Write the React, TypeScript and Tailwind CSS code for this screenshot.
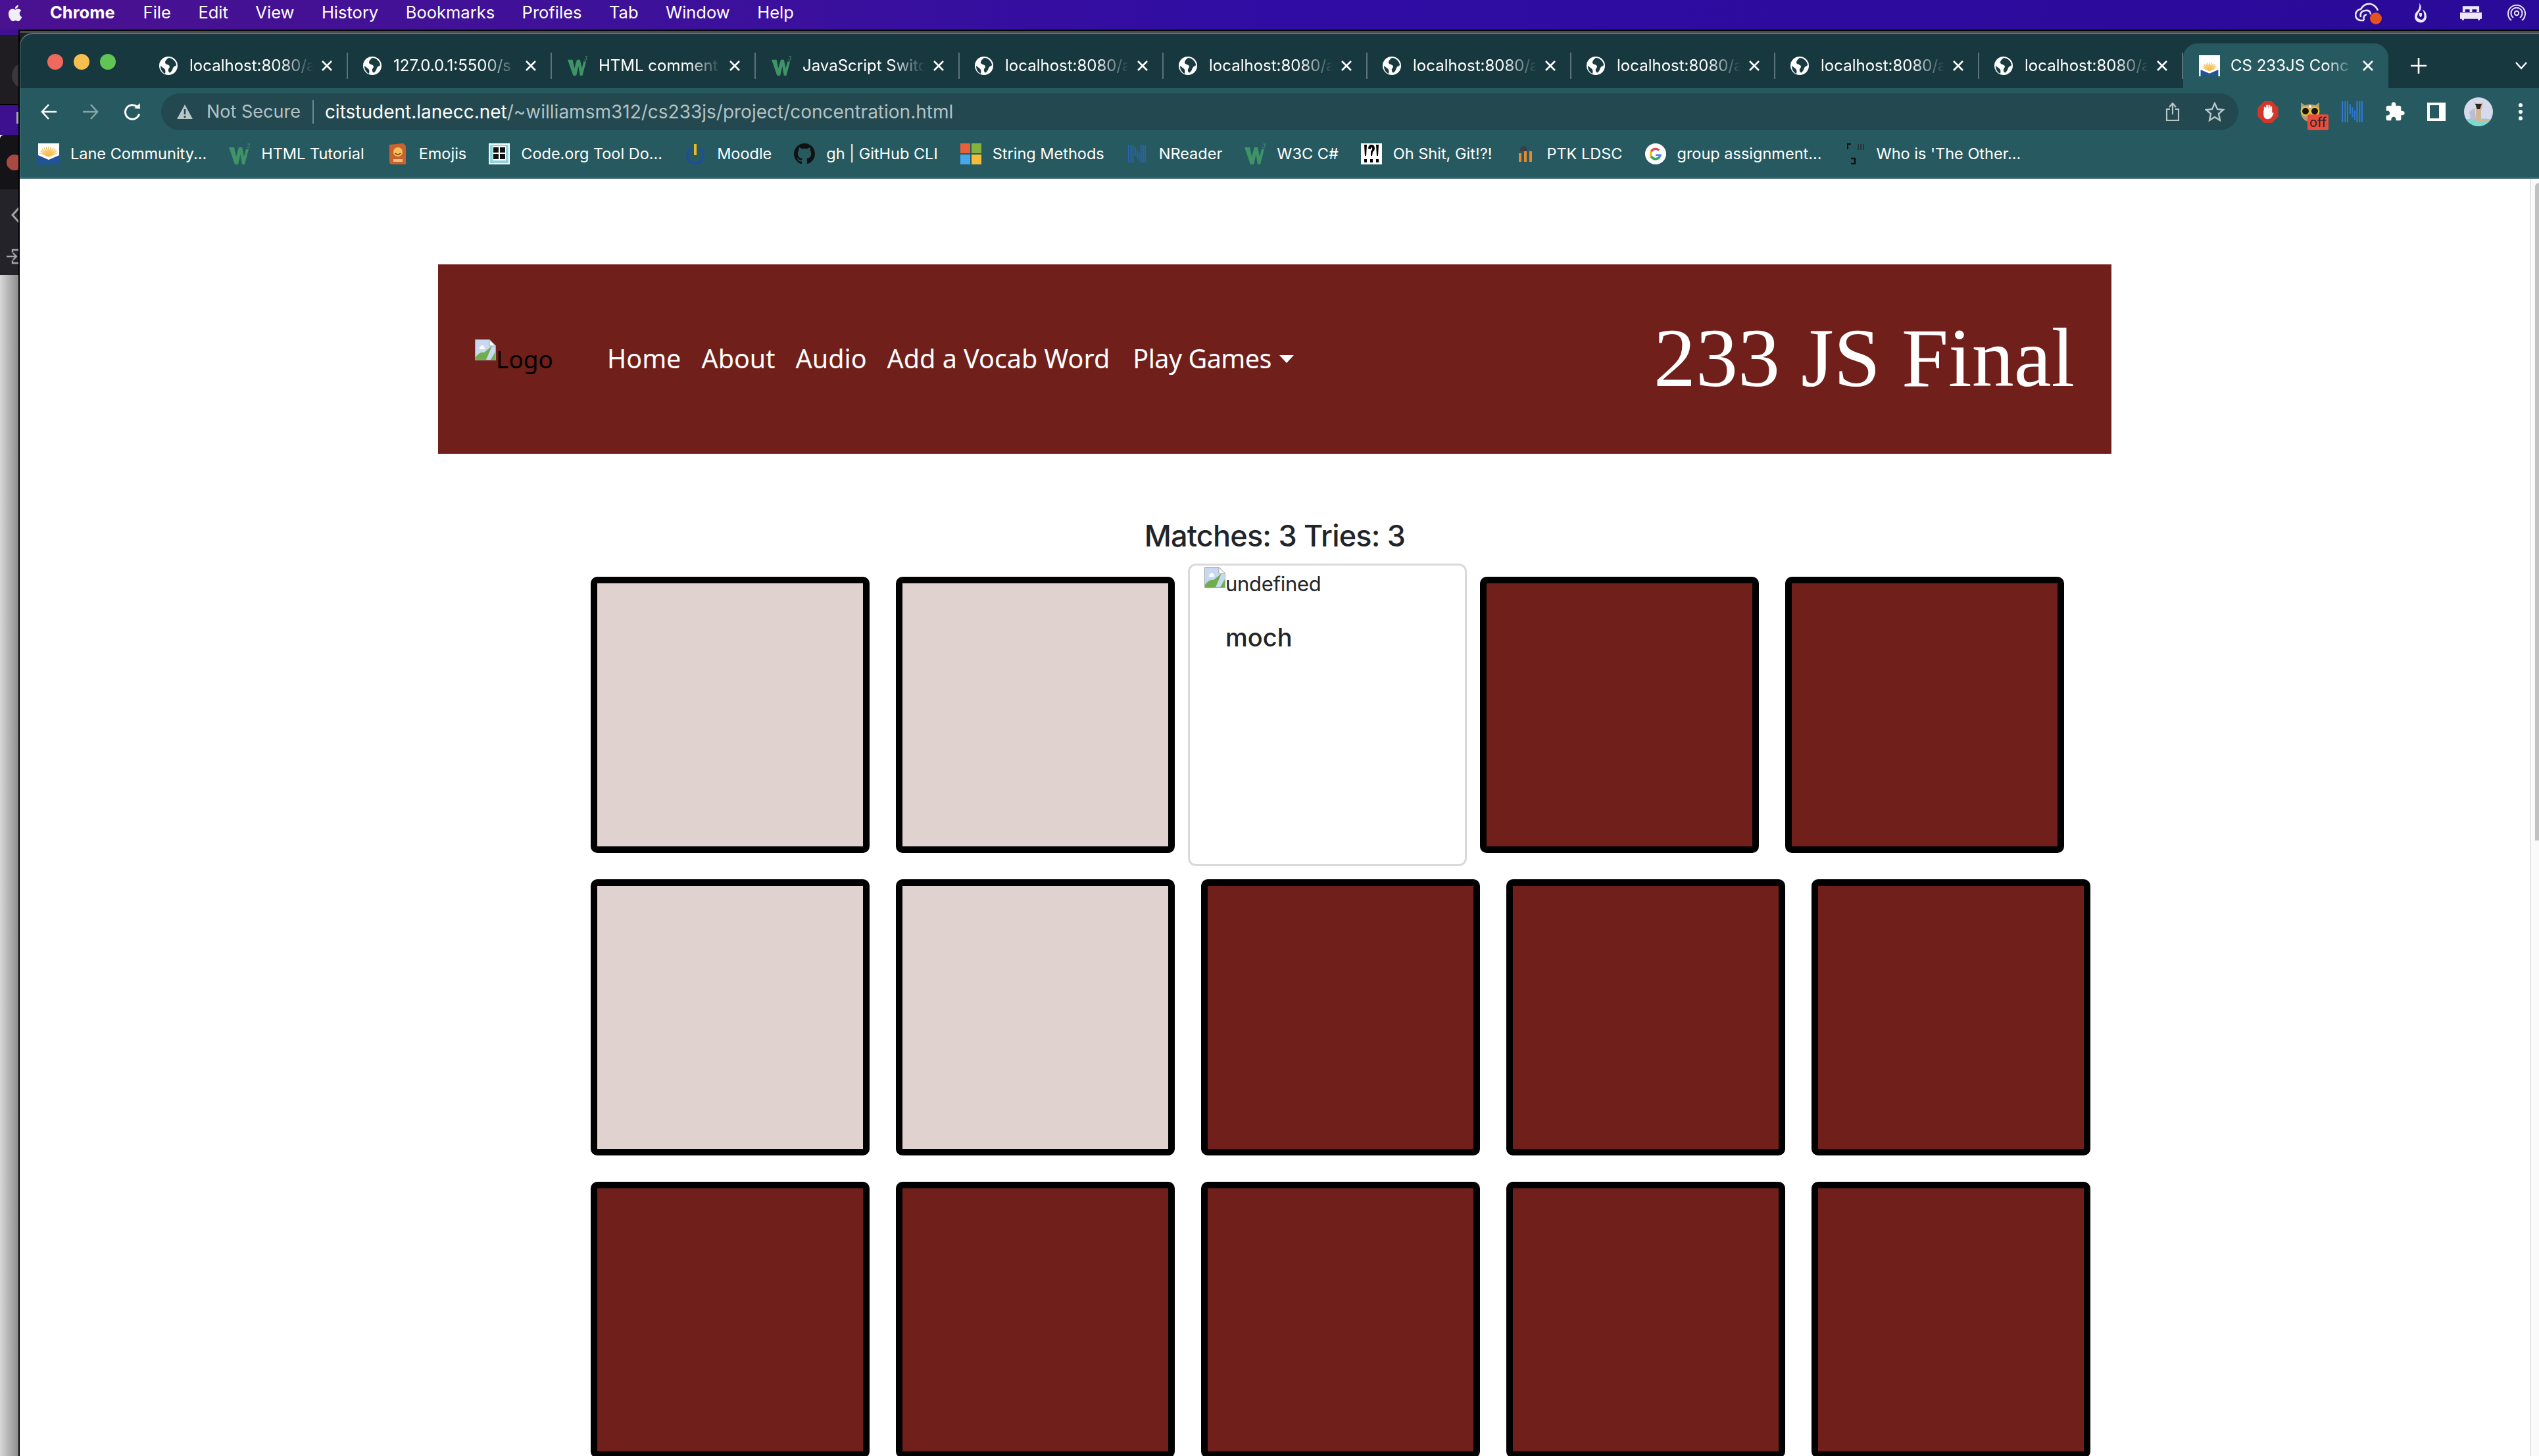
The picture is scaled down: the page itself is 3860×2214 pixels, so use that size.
import React from "react";

const sans = "font-['Inter',sans-serif]";

function Globe({ className = "" }: { className?: string }) {
  return (
    <svg viewBox="0 0 28 28" className={className}>
      <circle cx="14" cy="14" r="14" fill="#fff" />
      <path d="M14 2 C9 6 8 9 10 11 C13 13 15 12 16 15 C16 18 13 18 14 22 C15 25 17 25 18 23 C21 20 20 17 23 15 C25 14 26 14 26 12 C25 7 20 2 14 2Z" fill="#1a3a41" />
      <path d="M2 14 C4 16 7 17 9 20 C10 23 9 25 9 26 C5 24 2 20 2 14Z" fill="#1a3a41" />
    </svg>
  );
}

function W3({ className = "" }: { className?: string }) {
  return (
    <svg viewBox="0 0 32 32" className={className}>
      <path d="M0 6 H8 L11 20 L15 6 H20 L23 20 L26 9 H30 L24 32 H20 L17.5 17 L14 32 H9 Z" fill="#3f9367" />
      <path d="M28 1 H32 L30 3 Q32 4 31 6 Q29 8 27 6" fill="none" stroke="#3f9367" strokeWidth="1" />
    </svg>
  );
}

const rays = [-70, -55, -42, -28, -14, 0, 14, 28, 42, 55, 70];

function Lane({ className = "", small = false }: { className?: string; small?: boolean }) {
  return (
    <svg viewBox={small ? "-3 -8 38 38" : "0 0 32 32"} className={className}>
      <rect x={small ? -3 : 0} y={small ? -8 : 0} width={small ? 38 : 32} height={small ? 38 : 32} fill="#fff" />
      {rays.map((a) => (
        <path key={a} d="M16 20 V5" stroke="#f4bf4f" strokeWidth="1.5" transform={`rotate(${a} 16 20)`} />
      ))}
      <path d="M4 17 A13 13 0 0 1 28 17 L16 22Z" fill="#f4bf4f" opacity="0.35" />
      <path d="M0 14 L16 21 L32 14 V19 L16 25 L0 19Z" fill="#fff" />
      <path d="M0 18 L16 25 L32 18 V32 H0Z" fill="#21539b" />
    </svg>
  );
}

function Broken({ className = "" }: { className?: string }) {
  return (
    <svg viewBox="0 0 32 32" className={className}>
      <path d="M0.5 0.5 H22 L31.5 10 V31.5 H0.5Z" fill="#c8d8f2" stroke="#a5a5a5" />
      <path d="M22 0.5 V10 H31.5Z" fill="#fff" stroke="#a5a5a5" />
      <path d="M7 15 Q7 10 11 9 Q15 10 15 15Z" fill="#fff" />
      <path d="M1 31 V27 Q8 18 14 20 L26 10 L17 31Z" fill="#6fae4d" />
      <path d="M24 31 L31 19 V31Z" fill="#6fae4d" />
    </svg>
  );
}

function NIcon({ className = "", color = "#2f76cf" }: { className?: string; color?: string }) {
  const bars = [
    [0, 0, 7, 96],
    [13, 0, 7, 96],
    [24, 0, 6, 96],
    [35, 13, 7, 45],
    [46, 28, 6, 45],
    [57, 41, 6, 45],
    [67, 0, 7, 96],
    [78, 0, 7, 96],
    [89, 0, 7, 96],
  ];
  return (
    <svg viewBox="0 0 96 96" className={className}>
      {bars.map((b) => (
        <rect key={b[0]} x={b[0]} y={b[1]} width={b[2]} height={b[3]} fill={color} />
      ))}
    </svg>
  );
}

const tabs: { label: string; icon: "globe" | "w3" }[] = [
  { label: "localhost:8080/a", icon: "globe" },
  { label: "127.0.0.1:5500/s", icon: "globe" },
  { label: "HTML comment", icon: "w3" },
  { label: "JavaScript Switc", icon: "w3" },
  { label: "localhost:8080/a", icon: "globe" },
  { label: "localhost:8080/a", icon: "globe" },
  { label: "localhost:8080/a", icon: "globe" },
  { label: "localhost:8080/a", icon: "globe" },
  { label: "localhost:8080/a", icon: "globe" },
  { label: "localhost:8080/a", icon: "globe" },
];

function X() {
  return (
    <svg viewBox="0 0 18 18" className="ml-[8px] h-[18px] w-[18px] shrink-0">
      <path d="M2 2 L16 16 M16 2 L2 16" stroke="#fff" strokeWidth="2.6" />
    </svg>
  );
}

function Tab({ label, icon }: { label: string; icon: "globe" | "w3" }) {
  return (
    <div className="flex h-[40px] w-[310px] shrink-0 items-center border-r-2 border-[#5a7479] pl-[23px] pr-[21px]">
      {icon === "globe" ? <Globe className="mr-[18px] h-[28px] w-[28px] shrink-0" /> : <W3 className="mr-[16px] h-[30px] w-[32px] shrink-0" />}
      <span className="min-w-0 flex-1 whitespace-nowrap text-[24px] text-white [mask-image:linear-gradient(to_right,black_72%,transparent_98%)]">
        {label}
      </span>
      <X />
    </div>
  );
}

const menus = ["File", "Edit", "View", "History", "Bookmarks", "Profiles", "Tab", "Window", "Help"];

function Mark({ children }: { children: React.ReactNode }) {
  return <span className="flex shrink-0 items-center gap-[17px]">{children}</span>;
}

function Box({ children }: { children: React.ReactNode }) {
  return <span className="flex h-[32px] w-[32px] shrink-0 items-center justify-center">{children}</span>;
}

function Bookmarks() {
  const t = "text-[23.5px] text-white whitespace-nowrap";
  return (
    <div className="flex h-[72px] items-center gap-[34px] pl-[27px]">
      <Mark><Lane className="h-[32px] w-[32px]" /><span className={t}>Lane Community...</span></Mark>
      <Mark><W3 className="h-[32px] w-[32px]" /><span className={t}>HTML Tutorial</span></Mark>
      <Mark>
        <Box>
          <svg viewBox="0 0 26 32" className="h-[32px] w-[26px]">
            <path d="M1 2 L22 0 L26 4 V32 H3 L1 29Z" fill="#c9622e" />
            <circle cx="14" cy="13" r="7" fill="#f3c25a" />
            <path d="M10 15 Q14 19 18 15" stroke="#703815" strokeWidth="1.4" fill="none" />
            <rect x="7" y="24" width="14" height="4" fill="#eac07a" />
          </svg>
        </Box>
        <span className={t}>Emojis</span>
      </Mark>
      <Mark>
        <svg viewBox="0 0 32 32" className="h-[32px] w-[32px]">
          <rect width="32" height="32" fill="#fff" />
          <rect x="2" y="2" width="28" height="28" fill="#8fd4dd" />
          <rect x="6" y="4" width="20" height="22" fill="#fff" />
          <rect x="7" y="6" width="8" height="8" fill="#111" />
          <rect x="17" y="6" width="8" height="8" fill="#111" />
          <rect x="7" y="16" width="8" height="8" fill="#111" />
          <rect x="17" y="16" width="8" height="8" fill="#111" />
        </svg>
        <span className={t}>Code.org Tool Do...</span>
      </Mark>
      <Mark>
        <Box>
          <svg viewBox="0 0 30 32" className="h-[32px] w-[30px]">
            <path d="M9 8 A12 12 0 1 0 21 8" fill="none" stroke="#1c4e9e" strokeWidth="3.5" />
            <rect x="13" y="1" width="4" height="17" fill="#e8b92d" />
          </svg>
        </Box>
        <span className={t}>Moodle</span>
      </Mark>
      <Mark>
        <svg viewBox="0 0 16 16" className="h-[32px] w-[32px]">
          <path fill="#111" d="M8 0C3.58 0 0 3.58 0 8c0 3.54 2.29 6.53 5.47 7.59.4.07.55-.17.55-.38 0-.19-.01-.82-.01-1.49-2.01.37-2.53-.49-2.69-.94-.09-.23-.48-.94-.82-1.13-.28-.15-.68-.52-.01-.53.63-.01 1.08.58 1.23.82.72 1.21 1.87.87 2.33.66.07-.52.28-.87.51-1.07-1.78-.2-3.64-.89-3.64-3.95 0-.87.31-1.59.82-2.15-.08-.2-.36-1.02.08-2.12 0 0 .67-.21 2.2.82.64-.18 1.32-.27 2-.27s1.36.09 2 .27c1.53-1.04 2.2-.82 2.2-.82.44 1.1.16 1.92.08 2.12.51.56.82 1.27.82 2.15 0 3.07-1.87 3.75-3.65 3.95.29.25.54.73.54 1.48 0 1.07-.01 1.93-.01 2.2 0 .21.15.46.55.38A8.01 8.01 0 0 0 16 8c0-4.42-3.58-8-8-8z" />
        </svg>
        <span className={t}>gh | GitHub CLI</span>
      </Mark>
      <Mark>
        <svg viewBox="0 0 32 32" className="h-[32px] w-[32px]">
          <rect width="15" height="15" fill="#e8613a" />
          <rect x="17" width="15" height="15" fill="#86b340" />
          <rect y="17" width="15" height="15" fill="#48a6ea" />
          <rect x="17" y="17" width="15" height="15" fill="#f5bd3a" />
        </svg>
        <span className={t}>String Methods</span>
      </Mark>
      <Mark>
        <Box><NIcon className="h-[32px] w-[27px]" color="#2a63ad" /></Box>
        <span className={t}>NReader</span>
      </Mark>
      <Mark><W3 className="h-[32px] w-[32px]" /><span className={t}>W3C C#</span></Mark>
      <Mark>
        <svg viewBox="0 0 32 32" className="h-[32px] w-[32px]">
          <rect width="32" height="32" fill="#fff" />
          <path d="M5 2 H9 L8 19 H6Z M23 2 H27 L26 19 H24Z M11 8 Q11 2 16 2 Q21 2 21 8 Q21 11 18 13 L17 19 H15 L15 12 Q18 10 17 7 Q16 5 15 7 L15 9Z" fill="#000" />
          <rect x="5" y="24" width="4" height="5" fill="#000" />
          <rect x="14" y="24" width="4" height="5" fill="#000" />
          <rect x="23" y="24" width="4" height="5" fill="#000" />
        </svg>
        <span className={t}>Oh Shit, Git!?!</span>
      </Mark>
      <Mark>
        <svg viewBox="0 0 32 32" className="h-[32px] w-[32px]">
          <path d="M8 12 Q10 2 18 4 L20 12Z" fill="#3a3f44" />
          <path d="M7 28 V15 H11 V28Z M15 28 V12 H19 V28Z M23 28 V12 H27 V28Z" fill="#e68a2e" />
        </svg>
        <span className={t}>PTK LDSC</span>
      </Mark>
      <Mark>
        <svg viewBox="0 0 32 32" className="h-[32px] w-[32px]">
          <circle cx="16" cy="16" r="16" fill="#fff" />
          <path d="M24 16.4 H16 V19 H21 A6 6 0 0 1 16 22 A6 6 0 0 1 16 10 Q18.3 10 20 11.5 L22 9.5 A9 9 0 1 0 25 16.4Z" fill="#4285f4" />
          <path d="M8 11 A9 9 0 0 1 22 9.5 L20 11.5 A6 6 0 0 0 10.5 13Z" fill="#ea4335" />
          <path d="M7 16 A9 9 0 0 1 8 11 L10.5 13 A6 6 0 0 0 10.5 19 L8 21 A9 9 0 0 1 7 16Z" fill="#fbbc05" />
          <path d="M8 21 L10.5 19 A6 6 0 0 0 19.5 21 L22 23 A9 9 0 0 1 8 21Z" fill="#34a853" />
        </svg>
        <span className={t}>group assignment...</span>
      </Mark>
      <Mark>
        <svg viewBox="0 0 32 32" className="h-[32px] w-[32px]">
          <path d="M5 9 V1 H10" fill="none" stroke="#111" strokeWidth="2" />
          <path d="M21 1 V10 M25 1 V10 M29 1 V10" stroke="#2b2b2b" strokeWidth="1.5" />
          <path d="M10 23 H16 V31 H10" fill="none" stroke="#111" strokeWidth="2.5" />
        </svg>
        <span className={t}>Who is 'The Other...</span>
      </Mark>
    </div>
  );
}

function MenuBar() {
  return (
    <div className="flex h-[45px] shrink-0 items-center bg-gradient-to-r from-[#4a1190] via-[#300ca4] to-[#2a0a98] pb-[6px] text-[25.5px] text-white">
      <svg viewBox="0 0 24 30" className="ml-[10px] h-[30px] w-[24px]">
        <path fill="#f2eef8" d="M19.7 15.9c0-3.2 2.6-4.7 2.7-4.8-1.5-2.1-3.8-2.4-4.5-2.5-1.9-.2-3.8 1.1-4.7 1.1-1 0-2.5-1.1-4.1-1.1-2.1 0-4 1.2-5.1 3.1-2.2 3.8-.6 9.4 1.6 12.5 1.1 1.5 2.3 3.2 4 3.1 1.6-.1 2.2-1 4.1-1 1.9 0 2.5 1 4.1 1 1.7 0 2.8-1.5 3.8-3 1.2-1.7 1.7-3.4 1.7-3.5-.1 0-3.6-1.4-3.6-5.9zM16.6 6.6c.9-1 1.4-2.5 1.3-3.9-1.2.1-2.8.8-3.7 1.9-.8.9-1.5 2.4-1.3 3.8 1.4.1 2.8-.7 3.7-1.8z" />
      </svg>
      <span className="ml-[42px] font-bold">Chrome</span>
      <div className="ml-[43px] flex gap-[41.5px]">
        {menus.map((m) => (
          <span key={m}>{m}</span>
        ))}
      </div>
      <div className="ml-auto mr-[20px] flex items-center">
        <span className="relative block h-[32px] w-[40px]">
          <svg viewBox="0 0 40 32" className="h-[32px] w-[40px]">
            <path d="M14 27 H8 Q1 25 1 18 Q2 11 9 10 Q14 1 24 2 Q32 4 35 12" fill="none" stroke="#ece8f6" strokeWidth="2.6" />
            <path d="M9 22 Q7 13 16 12 Q24 11 24 18 M14 27 Q12 19 18 18" fill="none" stroke="#ece8f6" strokeWidth="2.6" />
          </svg>
          <span className="absolute bottom-[-1px] right-[-1px] h-[18px] w-[18px] rounded-full bg-[#e2531f]" />
        </span>
        <svg viewBox="0 0 22 34" className="ml-[50px] h-[32px] w-[20px]">
          <path d="M9 0 Q14 7 10 13 Q6 18 5 23 Q7 27 13 28 Q18 26 17 20 Q17 15 14 11 Q21 14 21 24 Q19 33 11 33 Q2 32 1 24 Q1 17 6 13 Q10 8 9 0Z" fill="#ece8f6" />
          <path d="M9 17 Q8 22 11 24 Q14 22 13 17Z" fill="#ece8f6" />
        </svg>
        <svg viewBox="0 0 34 22" className="ml-[50px] h-[22px] w-[33px]">
          <path d="M4 0 H30 V9 H26 V5 H19 V9 H15 V5 H8 V9 H4Z M0 10 H34 V20 H31 V22 H28 V20 H6 V22 H3 V20 H0Z" fill="#ece8f6" />
        </svg>
        <svg viewBox="0 0 28 26" className="ml-[39px] h-[26px] w-[28px]">
          <path d="M6 24 A13 13 0 1 1 22 24 M9 20 A8.5 8.5 0 1 1 19 20" fill="none" stroke="#e8e4f5" strokeWidth="2" />
          <circle cx="14" cy="13" r="3.2" fill="none" stroke="#e8e4f5" strokeWidth="2" />
        </svg>
      </div>
    </div>
  );
}

function DesktopSliver() {
  return (
    <div className="flex w-[30px] shrink-0 flex-col border-r-2 border-black">
      <div className="h-[8px] bg-[#3f1092]" />
      <div className="relative h-[105px] overflow-hidden bg-[#1f1d22]">
        <span className="absolute left-[18px] top-[42px] h-[40px] w-[40px] rounded-full bg-[#3a383c]" />
      </div>
      <div className="h-[2px] bg-black" />
      <div className="relative h-[45px] bg-[#3d1090]">
        <span className="absolute left-[25px] top-[10px] h-[18px] w-[3px] bg-[#a9a9b5]" />
      </div>
      <div className="relative h-[83px] overflow-hidden rounded-tl-[6px] bg-[#141418]">
        <span className="absolute left-[10px] top-[30px] h-[24px] w-[24px] rounded-full bg-[#a84a42]" />
      </div>
      <div className="relative h-[130px] overflow-hidden bg-[#232329]">
        <svg viewBox="0 0 20 24" className="absolute left-[17px] top-[27px] h-[24px] w-[20px]">
          <path d="M12 1 L2 12 L12 23" fill="none" stroke="#a5a5a8" strokeWidth="3" />
        </svg>
        <svg viewBox="0 0 30 24" className="absolute left-[10px] top-[90px] h-[24px] w-[30px]">
          <path d="M0 12 H14 M10 7 L15 12 L10 17 M9 6 V2 H20 M9 18 V22 H20" fill="none" stroke="#a5a5a8" strokeWidth="2.4" />
        </svg>
      </div>
      <div className="flex-1 bg-gradient-to-r from-[#d8d8d8] to-[#8d8d8d]" />
    </div>
  );
}

function TabStrip() {
  return (
    <div className="h-[84px] shrink-0 rounded-tl-[20px] border-l border-t-2 border-[#57777a] bg-[#18383f]">
      <div className="relative flex h-[82px] items-end pl-[188px]">
        <div className="absolute left-[41px] top-[30px] flex gap-[16px]">
          <span className="h-[24px] w-[24px] rounded-full bg-[#ee6a5f]" />
          <span className="h-[24px] w-[24px] rounded-full bg-[#f5bf4f]" />
          <span className="h-[24px] w-[24px] rounded-full bg-[#61c554]" />
        </div>
        <div className="flex h-[68px] items-center">
          {tabs.map((t, i) => (
            <Tab key={i} label={t.label} icon={t.icon} />
          ))}
        </div>
        <div className="flex h-[68px] w-[312px] shrink-0 items-center rounded-t-[22px] bg-[#265a60] pl-[24px] pr-[22px]">
          <Lane small className="h-[32px] w-[32px] shrink-0" />
          <span className="ml-[16px] min-w-0 flex-1 whitespace-nowrap text-[24px] text-white [mask-image:linear-gradient(to_right,black_75%,transparent_98%)]">
            CS 233JS Conc
          </span>
          <X />
        </div>
        <div className="flex h-[68px] flex-1 items-center">
          <svg viewBox="0 0 24 24" className="ml-[34px] h-[24px] w-[24px]">
            <path d="M12 0 V24 M0 12 H24" stroke="#fff" strokeWidth="2.6" />
          </svg>
          <svg viewBox="0 0 20 12" className="ml-[134px] h-[12px] w-[20px]">
            <path d="M2 1 L10 10 L18 1" fill="none" stroke="#fff" strokeWidth="2.4" />
          </svg>
        </div>
      </div>
    </div>
  );
}

function Toolbar() {
  return (
    <div className="flex h-[64px] shrink-0 items-start border-l border-[#4f7a7f] bg-[#265a60] pt-[8px]">
      <div className="flex h-[56px] shrink-0 items-center pl-[31px]">
        <svg viewBox="0 0 26 26" className="h-[26px] w-[26px]">
          <path d="M24 13 H3 M12 2 L2 13 L12 24" fill="none" stroke="#fff" strokeWidth="2.6" />
        </svg>
        <svg viewBox="0 0 26 26" className="ml-[36px] h-[26px] w-[26px]">
          <path d="M2 13 H23 M14 2 L24 13 L14 24" fill="none" stroke="#8ba3a6" strokeWidth="2.6" />
        </svg>
        <svg viewBox="0 0 26 26" className="ml-[38px] h-[28px] w-[28px]">
          <path d="M22 16 A10 10 0 1 1 19 6" fill="none" stroke="#fff" strokeWidth="2.8" />
          <path d="M15 8 L23 9 L23 1Z" fill="#fff" />
        </svg>
      </div>
      <div className="ml-[29px] flex h-[56px] w-[3158px] shrink-0 items-center rounded-full bg-[#234850] pl-[24px] pr-[21px]">
        <svg viewBox="0 0 24 22" className="h-[22px] w-[24px]">
          <path d="M12 0 L24 22 H0Z" fill="#b9c6c8" />
          <rect x="10.7" y="7" width="2.6" height="8" fill="#234850" />
          <rect x="10.7" y="17" width="2.6" height="3" fill="#234850" />
        </svg>
        <span className="ml-[21px] text-[27px] text-[#b4c2c4]">Not Secure</span>
        <span className="ml-[18px] h-[36px] w-[2px] bg-[#6f8a8d]" />
        <span className="ml-[17px] text-[28px] text-white">citstudent.lanecc.net</span>
        <span className="text-[28px] text-[#b4c2c4]">/~williamsm312/cs233js/project/concentration.html</span>
        <svg viewBox="0 0 22 28" className="ml-auto h-[28px] w-[22px]">
          <path d="M7 10 H2 V27 H20 V10 H15 M11 18 V2 M6 7 L11 1 L16 7" fill="none" stroke="#b9c6c8" strokeWidth="2.2" />
        </svg>
        <svg viewBox="0 0 30 30" className="ml-[38px] h-[30px] w-[30px]">
          <path d="M15 2 L19 11 L28 12 L21 18 L23 28 L15 23 L7 28 L9 18 L2 12 L11 11Z" fill="none" stroke="#b9c6c8" strokeWidth="2.4" />
        </svg>
      </div>
      <div className="flex h-[56px] flex-1 items-center">
        <svg viewBox="0 0 32 34" className="ml-[29px] h-[33px] w-[32px]">
          <path d="M10 0 H22 L32 10 V24 L22 34 H10 L0 24 V10Z" fill="#d3372a" />
          <path d="M9 14 V20 Q9 28 16 28 Q22 28 25 18 L22 18 L21 20 V11 H11 V18Z" fill="#fff" />
          <path d="M11 10 V18 M14.5 7 V18 M18 7 V18 M21 9 V18" stroke="#fff" strokeWidth="2.8" strokeLinecap="round" />
        </svg>
        <span className="relative ml-[33px] block h-[30px] w-[30px]">
          <svg viewBox="0 0 30 30" className="h-[30px] w-[30px]">
            <path d="M1 1 L7 5 Q15 2 23 5 L29 1 L29 18 Q26 30 15 30 Q4 30 1 18Z" fill="#b99a76" />
            <circle cx="8" cy="14" r="7.5" fill="#e6c23a" />
            <circle cx="22" cy="14" r="7.5" fill="#e6c23a" />
            <circle cx="8" cy="14" r="5" fill="#161616" />
            <circle cx="22" cy="14" r="5" fill="#161616" />
            <circle cx="15" cy="7" r="2" fill="#fff" />
          </svg>
          <span className="absolute left-[11px] top-[19px] flex h-[24px] w-[32px] items-center justify-center rounded-[3px] bg-[#e94d3f] text-[20px] leading-none text-[#222]">off</span>
        </span>
        <NIcon className="ml-[33px] h-[32px] w-[32px]" />
        <svg viewBox="0 0 24 24" className="ml-[33px] h-[32px] w-[32px]">
          <path fill="#fff" d="M20.5 11H19V7c0-1.1-.9-2-2-2h-4V3.5C13 2.12 11.88 1 10.5 1S8 2.12 8 3.5V5H4c-1.1 0-1.99.9-1.99 2v3.8H3.5c1.49 0 2.7 1.21 2.7 2.7s-1.21 2.7-2.7 2.7H2V20c0 1.1.9 2 2 2h3.8v-1.5c0-1.49 1.21-2.7 2.7-2.7 1.49 0 2.7 1.21 2.7 2.7V22H17c1.1 0 2-.9 2-2v-4h1.5c1.38 0 2.5-1.12 2.5-2.5S21.88 11 20.5 11z" />
        </svg>
        <span className="ml-[33px] block h-[28px] w-[28px] border-y-[4px] border-l-[4px] border-r-[10px] border-white" />
        <span className="ml-[28px] block h-[44px] w-[44px] overflow-hidden rounded-full bg-[#d5dbec]">
          <svg viewBox="0 0 44 44" className="h-[44px] w-[44px]">
            <path d="M0 34 Q22 30 44 34 V44 H0Z" fill="#7fd8cf" />
            <path d="M18 12 L15 7 L20 9 H26 L29 7 L28 13 L26 20 L26 34 L38 34 V36 H18 L18 20Z" fill="#cfb697" />
            <path d="M17 10 L27 10 L24 18 H20Z" fill="#2e2520" />
            <path d="M8 22 L16 16 L18 33 H10Z" fill="#b9bfd0" />
          </svg>
        </span>
        <svg viewBox="0 0 6 26" className="ml-[39px] h-[26px] w-[6px]">
          <circle cx="3" cy="3" r="3" fill="#fff" />
          <circle cx="3" cy="13" r="3" fill="#fff" />
          <circle cx="3" cy="23" r="3" fill="#fff" />
        </svg>
      </div>
    </div>
  );
}

function Back({ matched = false }: { matched?: boolean }) {
  return (
    <div
      className={`m-[20px] h-[420px] w-[424px] shrink-0 rounded-[10px] border-[10px] border-black ${
        matched ? "bg-[#e0d2cf]" : "bg-[#701f1a]"
      }`}
    />
  );
}

function Page() {
  return (
    <div className="flex min-h-0 flex-1 bg-white">
      <div className="min-w-0 flex-1 pl-[636px] pt-[130px]">
        <header className="flex h-[288px] w-[2544px] items-center bg-[#701f1a] px-[56px] font-['Noto_Sans',sans-serif]">
          <div className="flex h-[48px] w-[119px] shrink-0 items-start text-[37px] leading-[48px] text-black">
            <Broken className="h-[32px] w-[32px] shrink-0 -translate-y-[6px]" />
            <span>Logo</span>
          </div>
          <nav className="ml-[82px] flex items-center gap-[31px] text-[39.5px] text-white">
            <span>Home</span>
            <span>About</span>
            <span>Audio</span>
            <span className="mr-[4px]">Add a Vocab Word</span>
            <span className="flex items-center tracking-[-0.5px]">
              Play Games
              <span className="ml-[12px] h-0 w-0 border-x-[11px] border-t-[12px] border-x-transparent border-t-white" />
            </span>
          </nav>
          <h1 className="ml-auto -translate-y-[2px] font-['Liberation_Serif',serif] text-[128px] leading-none text-white">233 JS Final</h1>
        </header>
        <h3 className="mt-[96px] w-[2544px] text-center text-[45px] font-medium leading-[58px] tracking-[-0.8px] text-[#212529]">Matches: 3 Tries: 3</h3>
        <div className="ml-[212px] mt-[13px] flex w-[2320px] flex-wrap">
          <Back matched />
          <Back matched />
          <div className="flex h-[460px] w-[424px] shrink-0 flex-col rounded-[12px] border-[3px] border-[#d9d9d9] bg-white pl-[22px]">
            <div className="flex h-[48px] items-start text-[31px] leading-[48px] tracking-[-0.3px] text-[#212529]">
              <Broken className="mt-[2px] h-[32px] w-[32px] shrink-0" />
              <span className="translate-y-[4px]">undefined</span>
            </div>
            <div className="ml-[32px] mt-[37px] text-[38px] font-medium leading-[48px] text-[#212529]">moch</div>
          </div>
          <Back />
          <Back />
          <Back matched />
          <Back matched />
          <Back />
          <Back />
          <Back />
          <Back />
          <Back />
          <Back />
          <Back />
          <Back />
        </div>
      </div>
      <div className="flex w-[14px] shrink-0 justify-end border-l-2 border-[#e5e5e5] bg-[#fafafa] pt-[6px]">
        <span className="block h-[1000px] w-[6px] rounded-tl-[6px] bg-[#c1c1c1]" />
      </div>
    </div>
  );
}

export default function App() {
  return (
    <div className={`flex h-[2214px] w-[3860px] flex-col overflow-hidden bg-white ${sans}`}>
      <MenuBar />
      <div className="flex min-h-0 flex-1">
        <DesktopSliver />
        <div className="flex min-w-0 flex-1 flex-col bg-[#1f1d22]">
          <div className="h-[5px] shrink-0 border-t-2 border-black bg-[#4b4b4b]" />
          <TabStrip />
          <Toolbar />
          <div className="shrink-0 border-b-2 border-l border-[#4f7a7f] bg-[#265a60]">
            <Bookmarks />
          </div>
          <Page />
        </div>
      </div>
    </div>
  );
}
